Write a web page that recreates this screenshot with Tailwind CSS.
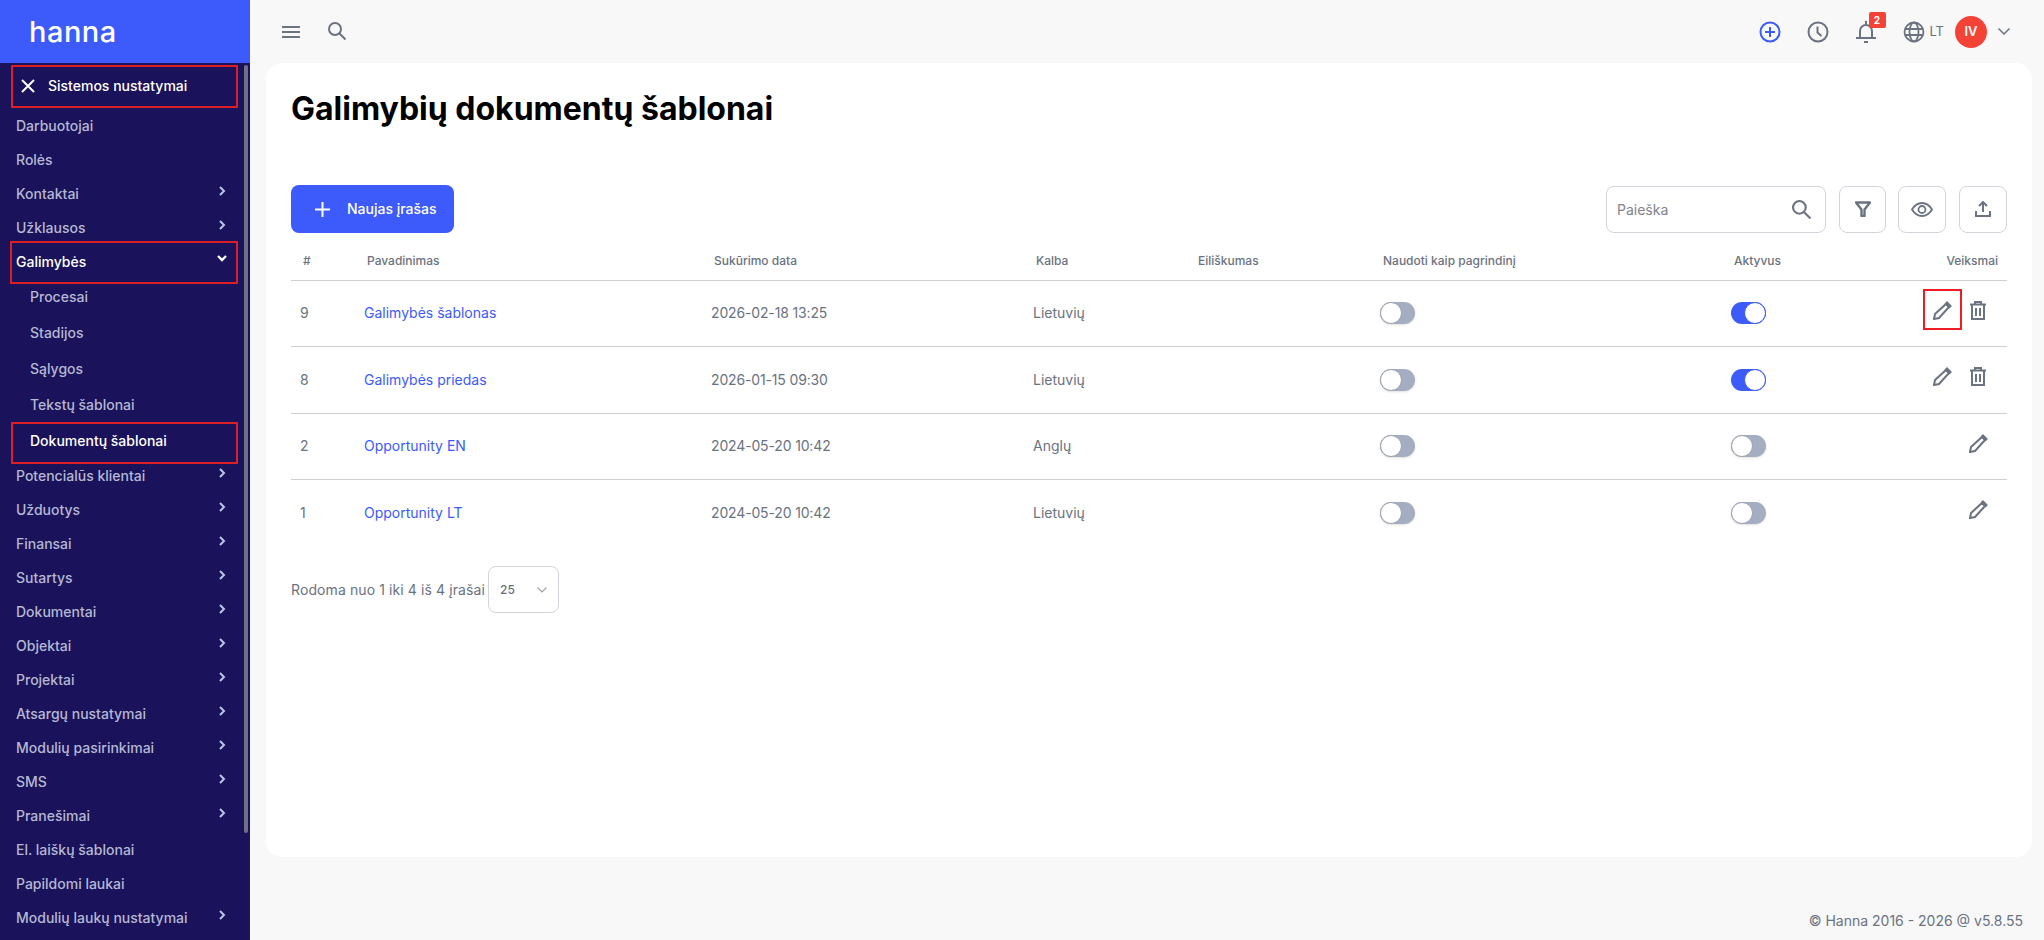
<!DOCTYPE html>
<html lang="en">
<head>
    <meta charset="UTF-8">
    <title>Galimybių dokumentų šablonai</title>
    <script src="https://cdn.jsdelivr.net/npm/@tailwindcss/browser@4"></script>
</head>
<body class="bg-[#f8f8f8] font-['Inter',sans-serif] h-screen overflow-hidden relative">
<div class="flex h-[940px]">
    <!-- Sidebar -->
    <aside class="w-[250px] shrink-0 h-full flex flex-col bg-[#1a125a]">
        <div class="h-[63px] shrink-0 bg-[#3d5afa] pl-[29px] pt-[14px] text-white text-[29px] leading-[36px] font-medium tracking-[0.5px]">hanna</div>
        <div class="relative flex-1 overflow-hidden text-sm font-medium text-[#b5b8d3]">
            <div class="absolute left-[244px] top-[2px] w-[4px] h-[768px] rounded-full bg-[#6f7285]"></div>
            <div class="h-[46px] flex items-center pl-[21px] text-white">
                <svg class="w-[14px] h-[14px] mr-[13px]" viewBox="0 0 14 14" fill="none" stroke="currentColor" stroke-width="2"><path d="M1 1l12 12M13 1L1 13"/></svg>
                Sistemos nustatymai
            </div>
            <div class="h-[34px] flex items-center pl-4">Darbuotojai</div>
            <div class="h-[34px] flex items-center pl-4">Rolės</div>
            <div class="h-[34px] flex items-center justify-between pl-4 pr-6">Kontaktai <svg class="w-[7px] h-[10px] -mt-[7px] text-[#b9c6e6]" viewBox="0 0 7 10" fill="none" stroke="currentColor" stroke-width="2"><path d="M1 1l4 4-4 4"/></svg></div>
            <div class="h-[34px] flex items-center justify-between pl-4 pr-6">Užklausos <svg class="w-[7px] h-[10px] -mt-[7px] text-[#b9c6e6]" viewBox="0 0 7 10" fill="none" stroke="currentColor" stroke-width="2"><path d="M1 1l4 4-4 4"/></svg></div>
            <div class="h-[34px] flex items-center justify-between pl-4 pr-[23px] text-white">Galimybės <svg class="w-[10px] h-[7px] -mt-[7px]" viewBox="0 0 10 7" fill="none" stroke="currentColor" stroke-width="2.400"><path d="M1 1l4 4 4-4"/></svg></div>
            <div class="h-9 flex items-center pl-[30px]">Procesai</div>
            <div class="h-9 flex items-center pl-[30px]">Stadijos</div>
            <div class="h-9 flex items-center pl-[30px]">Sąlygos</div>
            <div class="h-9 flex items-center pl-[30px]">Tekstų šablonai</div>
            <div class="h-9 flex items-center pl-[30px] text-white">Dokumentų šablonai</div>
            <div class="h-[34px] flex items-center justify-between pl-4 pr-6">Potencialūs klientai <svg class="w-[7px] h-[10px] -mt-[7px] text-[#b9c6e6]" viewBox="0 0 7 10" fill="none" stroke="currentColor" stroke-width="2"><path d="M1 1l4 4-4 4"/></svg></div>
            <div class="h-[34px] flex items-center justify-between pl-4 pr-6">Užduotys <svg class="w-[7px] h-[10px] -mt-[7px] text-[#b9c6e6]" viewBox="0 0 7 10" fill="none" stroke="currentColor" stroke-width="2"><path d="M1 1l4 4-4 4"/></svg></div>
            <div class="h-[34px] flex items-center justify-between pl-4 pr-6">Finansai <svg class="w-[7px] h-[10px] -mt-[7px] text-[#b9c6e6]" viewBox="0 0 7 10" fill="none" stroke="currentColor" stroke-width="2"><path d="M1 1l4 4-4 4"/></svg></div>
            <div class="h-[34px] flex items-center justify-between pl-4 pr-6">Sutartys <svg class="w-[7px] h-[10px] -mt-[7px] text-[#b9c6e6]" viewBox="0 0 7 10" fill="none" stroke="currentColor" stroke-width="2"><path d="M1 1l4 4-4 4"/></svg></div>
            <div class="h-[34px] flex items-center justify-between pl-4 pr-6">Dokumentai <svg class="w-[7px] h-[10px] -mt-[7px] text-[#b9c6e6]" viewBox="0 0 7 10" fill="none" stroke="currentColor" stroke-width="2"><path d="M1 1l4 4-4 4"/></svg></div>
            <div class="h-[34px] flex items-center justify-between pl-4 pr-6">Objektai <svg class="w-[7px] h-[10px] -mt-[7px] text-[#b9c6e6]" viewBox="0 0 7 10" fill="none" stroke="currentColor" stroke-width="2"><path d="M1 1l4 4-4 4"/></svg></div>
            <div class="h-[34px] flex items-center justify-between pl-4 pr-6">Projektai <svg class="w-[7px] h-[10px] -mt-[7px] text-[#b9c6e6]" viewBox="0 0 7 10" fill="none" stroke="currentColor" stroke-width="2"><path d="M1 1l4 4-4 4"/></svg></div>
            <div class="h-[34px] flex items-center justify-between pl-4 pr-6">Atsargų nustatymai <svg class="w-[7px] h-[10px] -mt-[7px] text-[#b9c6e6]" viewBox="0 0 7 10" fill="none" stroke="currentColor" stroke-width="2"><path d="M1 1l4 4-4 4"/></svg></div>
            <div class="h-[34px] flex items-center justify-between pl-4 pr-6">Modulių pasirinkimai <svg class="w-[7px] h-[10px] -mt-[7px] text-[#b9c6e6]" viewBox="0 0 7 10" fill="none" stroke="currentColor" stroke-width="2"><path d="M1 1l4 4-4 4"/></svg></div>
            <div class="h-[34px] flex items-center justify-between pl-4 pr-6">SMS <svg class="w-[7px] h-[10px] -mt-[7px] text-[#b9c6e6]" viewBox="0 0 7 10" fill="none" stroke="currentColor" stroke-width="2"><path d="M1 1l4 4-4 4"/></svg></div>
            <div class="h-[34px] flex items-center justify-between pl-4 pr-6">Pranešimai <svg class="w-[7px] h-[10px] -mt-[7px] text-[#b9c6e6]" viewBox="0 0 7 10" fill="none" stroke="currentColor" stroke-width="2"><path d="M1 1l4 4-4 4"/></svg></div>
            <div class="h-[34px] flex items-center pl-4">El. laiškų šablonai</div>
            <div class="h-[34px] flex items-center pl-4">Papildomi laukai</div>
            <div class="h-[34px] flex items-center justify-between pl-4 pr-6">Modulių laukų nustatymai <svg class="w-[7px] h-[10px] -mt-[7px] text-[#b9c6e6]" viewBox="0 0 7 10" fill="none" stroke="currentColor" stroke-width="2"><path d="M1 1l4 4-4 4"/></svg></div>
        </div>
    </aside>

    <div class="flex-1 flex flex-col min-w-0">
        <!-- Top bar -->
        <header class="h-[63px] shrink-0 flex items-center justify-between pl-[32px] pr-[34px] text-[#6b7280]">
            <div class="flex items-center gap-[28px]">
                <svg class="w-[18px] h-[14px]" viewBox="0 0 18 14" fill="none" stroke="currentColor" stroke-width="2"><path d="M0 2h18M0 7h18M0 12h18"/></svg>
                <svg class="w-[18px] h-[18px] -mt-[2px]" viewBox="0 0 18 18" fill="none" stroke="currentColor" stroke-width="2"><circle cx="7" cy="7" r="6"/><path d="M11.5 11.5L17.5 17.5"/></svg>
            </div>
            <div class="flex items-center">
                <svg class="w-[22px] h-[22px] text-[#3d5afa]" viewBox="0 0 22 22" fill="none" stroke="currentColor" stroke-width="2"><circle cx="11" cy="11" r="9.5"/><path d="M6 11h10M11 6v10"/></svg>
                <svg class="w-[22px] h-[22px] ml-[26px]" viewBox="0 0 22 22" fill="none" stroke="currentColor" stroke-width="2"><circle cx="11" cy="11" r="9.5"/><path d="M10.5 5.500v6l4 3.500"/></svg>
                <div class="relative ml-[26px] w-[22px] h-[24px]">
                    <svg class="w-[22px] h-[24px]" viewBox="0 0 22 24" fill="none" stroke="currentColor" stroke-width="2"><path d="M11 1v4M5 18v-7a6 6 0 0112 0v7M1 18h20M9 22h4" /></svg>
                    <span class="absolute left-[14px] -top-[8px] w-[17px] h-[16px] rounded-[2px] bg-[#f44336] text-white text-[10px] leading-[16px] font-bold text-center">2</span>
                </div>
                <svg class="w-[22px] h-[22px] ml-[26px]" viewBox="0 0 22 22" fill="none" stroke="currentColor" stroke-width="1.800"><circle cx="11" cy="11" r="9.500"/><ellipse cx="11" cy="11" rx="4.500" ry="9.500"/><path d="M2 8h18M2 14h18"/></svg>
                <span class="ml-[5px] text-[13px]">LT</span>
                <span class="ml-[11px] w-8 h-8 rounded-full bg-[#f44336] text-white text-[13px] font-semibold flex items-center justify-center">IV</span>
                <svg class="w-[12px] h-[7px] ml-[11px]" viewBox="0 0 12 7" fill="none" stroke="currentColor" stroke-width="1.500"><path d="M0.500 0.500L6 6l5.500-5.500"/></svg>
            </div>
        </header>

        <!-- Card -->
        <main class="h-[794px] shrink-0 ml-4 mr-3 bg-white rounded-2xl px-[25px]">
            <h1 class="mt-[25px] text-[32px] leading-[42px] font-bold text-black">Galimybių dokumentų šablonai</h1>
            <div class="mt-[55px] flex items-center justify-between">
                <button class="w-[163px] h-[48px] rounded-lg bg-[#3d5afa] text-white text-sm font-medium flex items-center pl-6">
                    <svg class="w-[15px] h-[15px] mr-[17px]" viewBox="0 0 15 15" fill="none" stroke="currentColor" stroke-width="2"><path d="M0 7.500h15M7.500 0v15"/></svg>
                    Naujas įrašas
                </button>
                <div class="flex items-center text-[#6b7280]">
                    <div class="w-[220px] h-[47px] rounded-lg border border-[#d1d5db] flex items-center justify-between pl-[10px] pr-[14px] text-sm text-[#80848c]">
                        <span class="mt-[2px]">Paieška</span>
                        <svg class="w-[19px] h-[19px] text-[#6b7280]" viewBox="0 0 18 18" fill="none" stroke="currentColor" stroke-width="2"><circle cx="7" cy="7" r="6"/><path d="M11.500 11.500L17.500 17.500"/></svg>
                    </div>
                    <div class="ml-[13px] w-[47px] h-[47px] rounded-lg border border-[#d1d5db] flex items-center justify-center">
                        <svg class="w-[16px] h-[16px]" viewBox="0 0 16 16" fill="none" stroke="currentColor" stroke-width="2.400" stroke-linejoin="round"><path d="M1 1.500h14L9.500 8.500V15h-3V8.500z"/></svg>
                    </div>
                    <div class="ml-[12px] w-[48px] h-[47px] rounded-lg border border-[#d1d5db] flex items-center justify-center">
                        <svg class="w-[22px] h-[15px]" viewBox="0 0 22 15" fill="none" stroke="currentColor" stroke-width="1.800"><path d="M1 7.500C4 2.500 7.500 1 11 1s7 1.500 10 6.500C18 12.500 14.500 14 11 14S4 12.500 1 7.500z"/><circle cx="11" cy="7.500" r="3.500"/></svg>
                    </div>
                    <div class="ml-[13px] w-[48px] h-[47px] rounded-lg border border-[#d1d5db] flex items-center justify-center">
                        <svg class="w-[16px] h-[16px]" viewBox="0 0 16 16" fill="none" stroke="currentColor" stroke-width="2"><path d="M8 11V2M4 5l4-4 4 4M1 10v5h14v-5"/></svg>
                    </div>
                </div>
            </div>

            <table class="mt-[9px] w-[1716px] table-fixed border-collapse text-sm text-[#6b7280]">
                <colgroup>
                    <col class="w-[64px]"><col class="w-[347px]"><col class="w-[322px]"><col class="w-[162px]"><col class="w-[185px]"><col class="w-[351px]"><col class="w-[285px]">
                </colgroup>
                <thead>
                    <tr class="h-[38px] border-b border-[#cfd0d4] text-xs font-medium">
                        <th class="pl-3 text-left font-medium">#</th>
                        <th class="pl-3 text-left font-medium">Pavadinimas</th>
                        <th class="pl-3 text-left font-medium">Sukūrimo data</th>
                        <th class="pl-3 text-left font-medium">Kalba</th>
                        <th class="pl-3 text-left font-medium">Eiliškumas</th>
                        <th class="pl-3 text-left font-medium">Naudoti kaip pagrindinį</th>
                        <th class="pl-3 text-left font-medium"><div class="flex justify-between pr-[9px]"><span>Aktyvus</span><span>Veiksmai</span></div></th>
                    </tr>
                </thead>
                <tbody>
                    <tr class="h-[66px] border-b border-[#cfd0d4]">
                        <td class="pl-[9px]">9</td>
                        <td class="pl-[9px] text-[#3d5afa]">Galimybės šablonas</td>
                        <td class="pl-[9px] tracking-[-0.15px]">2026-02-18 13:25</td>
                        <td class="pl-[9px]">Lietuvių</td>
                        <td></td>
                        <td class="pl-[9px]"><div class="w-[35px] h-[22px] rounded-full bg-[#a4adc2] shadow-sm"><div class="w-[22px] h-[22px] rounded-full bg-white border border-[#9ca3af]"></div></div></td>
                        <td class="pl-[9px]">
                            <div class="flex items-center justify-between pr-[21px]">
                                <div class="w-[35px] h-[22px] rounded-full bg-[#3d5afa] flex justify-end"><div class="w-[22px] h-[22px] rounded-full bg-white border border-[#3d5afa]"></div></div>
                                <div class="flex items-center gap-[18px] -mt-[6px]">
                                    <svg class="w-[19px] h-[19px]" viewBox="0 0 19 19" fill="none" stroke="currentColor" stroke-width="2"><path d="M1 18l1-5L13 3l3 3L6 17z"/><path d="M14 1.500l3.500 3.500-1 1L13 2.500z" fill="currentColor"/></svg>
                                    <svg class="w-[16px] h-[19px]" viewBox="0 0 16 19" fill="none" stroke="currentColor" stroke-width="2"><path d="M0 3.500h16M5 3V1h6v2M2 4v14h12V4M6 7v8M10 7v8"/></svg>
                                </div>
                            </div>
                        </td>
                    </tr>
                    <tr class="h-[67px] border-b border-[#cfd0d4]">
                        <td class="pl-[9px]">8</td>
                        <td class="pl-[9px] text-[#3d5afa]">Galimybės priedas</td>
                        <td class="pl-[9px] tracking-[-0.15px]">2026-01-15 09:30</td>
                        <td class="pl-[9px]">Lietuvių</td>
                        <td></td>
                        <td class="pl-[9px]"><div class="w-[35px] h-[22px] rounded-full bg-[#a4adc2] shadow-sm"><div class="w-[22px] h-[22px] rounded-full bg-white border border-[#9ca3af]"></div></div></td>
                        <td class="pl-[9px]">
                            <div class="flex items-center justify-between pr-[21px]">
                                <div class="w-[35px] h-[22px] rounded-full bg-[#3d5afa] flex justify-end"><div class="w-[22px] h-[22px] rounded-full bg-white border border-[#3d5afa]"></div></div>
                                <div class="flex items-center gap-[18px] -mt-[6px]">
                                    <svg class="w-[19px] h-[19px]" viewBox="0 0 19 19" fill="none" stroke="currentColor" stroke-width="2"><path d="M1 18l1-5L13 3l3 3L6 17z"/><path d="M14 1.500l3.500 3.500-1 1L13 2.500z" fill="currentColor"/></svg>
                                    <svg class="w-[16px] h-[19px]" viewBox="0 0 16 19" fill="none" stroke="currentColor" stroke-width="2"><path d="M0 3.500h16M5 3V1h6v2M2 4v14h12V4M6 7v8M10 7v8"/></svg>
                                </div>
                            </div>
                        </td>
                    </tr>
                    <tr class="h-[66px] border-b border-[#cfd0d4]">
                        <td class="pl-[9px]">2</td>
                        <td class="pl-[9px] text-[#3d5afa]">Opportunity EN</td>
                        <td class="pl-[9px] tracking-[-0.15px]">2024-05-20 10:42</td>
                        <td class="pl-[9px]">Anglų</td>
                        <td></td>
                        <td class="pl-[9px]"><div class="w-[35px] h-[22px] rounded-full bg-[#a4adc2] shadow-sm"><div class="w-[22px] h-[22px] rounded-full bg-white border border-[#9ca3af]"></div></div></td>
                        <td class="pl-[9px]">
                            <div class="flex items-center justify-between pr-[19px]">
                                <div class="w-[35px] h-[22px] rounded-full bg-[#a4adc2] shadow-sm"><div class="w-[22px] h-[22px] rounded-full bg-white border border-[#9ca3af]"></div></div>
                                <svg class="w-[19px] h-[19px] -mt-[6px]" viewBox="0 0 19 19" fill="none" stroke="currentColor" stroke-width="2"><path d="M1 18l1-5L13 3l3 3L6 17z"/><path d="M14 1.500l3.500 3.500-1 1L13 2.500z" fill="currentColor"/></svg>
                            </div>
                        </td>
                    </tr>
                    <tr class="h-[67px]">
                        <td class="pl-[9px]">1</td>
                        <td class="pl-[9px] text-[#3d5afa]">Opportunity LT</td>
                        <td class="pl-[9px] tracking-[-0.15px]">2024-05-20 10:42</td>
                        <td class="pl-[9px]">Lietuvių</td>
                        <td></td>
                        <td class="pl-[9px]"><div class="w-[35px] h-[22px] rounded-full bg-[#a4adc2] shadow-sm"><div class="w-[22px] h-[22px] rounded-full bg-white border border-[#9ca3af]"></div></div></td>
                        <td class="pl-[9px]">
                            <div class="flex items-center justify-between pr-[19px]">
                                <div class="w-[35px] h-[22px] rounded-full bg-[#a4adc2] shadow-sm"><div class="w-[22px] h-[22px] rounded-full bg-white border border-[#9ca3af]"></div></div>
                                <svg class="w-[19px] h-[19px] -mt-[6px]" viewBox="0 0 19 19" fill="none" stroke="currentColor" stroke-width="2"><path d="M1 18l1-5L13 3l3 3L6 17z"/><path d="M14 1.500l3.500 3.500-1 1L13 2.500z" fill="currentColor"/></svg>
                            </div>
                        </td>
                    </tr>
                </tbody>
            </table>

            <div class="mt-[20px] flex items-center text-sm text-[#6b7280]">
                <span class="tracking-[0.1px]">Rodoma nuo 1 iki 4 iš 4 įrašai</span>
                <div class="ml-[3px] w-[71px] h-[47px] rounded-lg border border-[#d1d5db] flex items-center justify-between pl-[11px] pr-[11px] text-xs font-medium">
                    25
                    <svg class="w-[10px] h-[6px] text-[#9ca3af]" viewBox="0 0 10 6" fill="none" stroke="currentColor" stroke-width="1.200"><path d="M0.500 0.500L5 5l4.500-4.500"/></svg>
                </div>
            </div>
        </main>

        <footer class="flex-1 flex items-center justify-end pr-[21px] pt-[44px] text-sm text-[#6b7280]">© Hanna 2016 - 2026 @ v5.8.55</footer>
    </div>
</div>

<!-- Red annotation boxes drawn over the page -->
<div class="absolute left-[11px] top-[65px] w-[227px] h-[43px] border-2 border-[#dc1f26]"></div>
<div class="absolute left-[10px] top-[241px] w-[228px] h-[43px] border-2 border-[#dc1f26]"></div>
<div class="absolute left-[11px] top-[422px] w-[227px] h-[42px] border-2 border-[#dc1f26]"></div>
<div class="absolute left-[1923px] top-[289px] w-[39px] h-[41px] border-2 border-[#ee1c25]"></div>
</body>
</html>
